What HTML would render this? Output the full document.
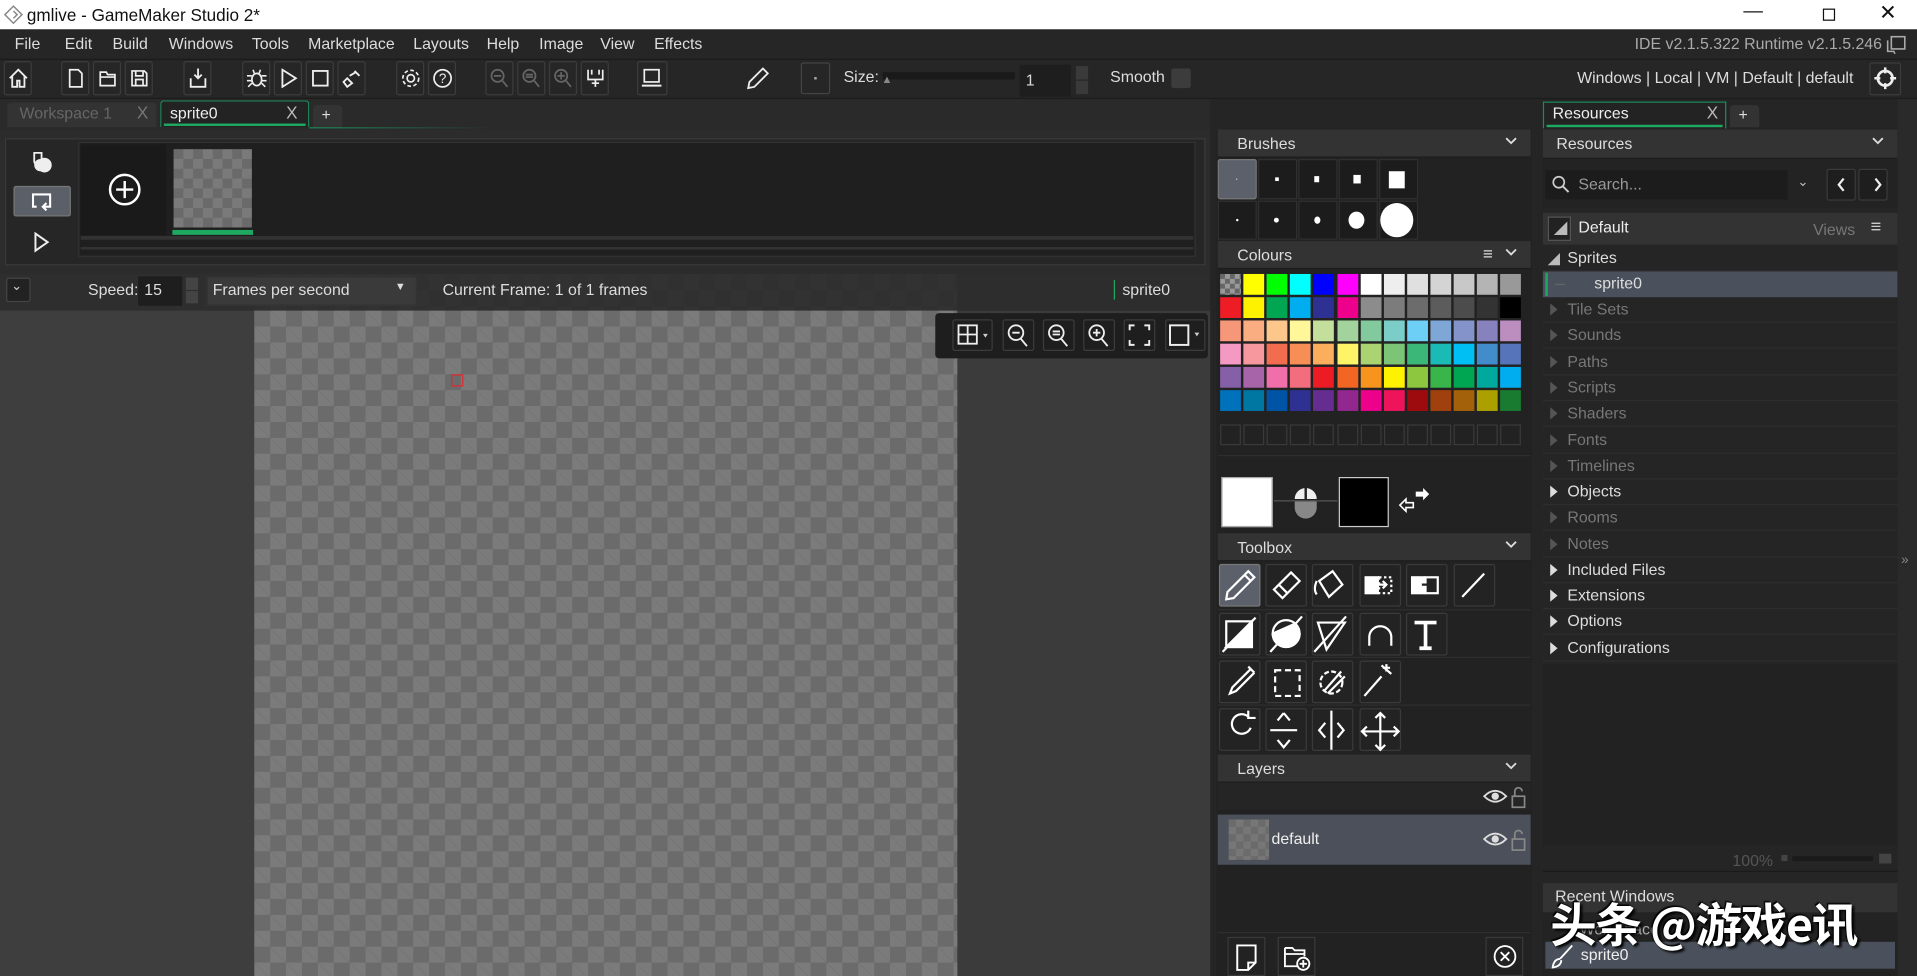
<!DOCTYPE html>
<html><head><meta charset="utf-8">
<style>
*{margin:0;padding:0;box-sizing:border-box}
html,body{width:1917px;height:976px;overflow:hidden;background:#222}
#w{position:absolute;left:0;top:0;width:1568px;height:798px;transform:scale(1.22258,1.2231);transform-origin:0 0;background:#222;font-family:"Liberation Sans","Noto Sans CJK SC",sans-serif;font-size:13px;color:#ddd;overflow:hidden}
.a{position:absolute}
.t{position:absolute;white-space:nowrap}
.btn{position:absolute;width:23px;height:28px;border:1px solid #3c3c3c;border-radius:2px;background:#262626}
.hdr{position:absolute;background:#333;height:23px;color:#ddd;font-size:13px;padding:4px 0 0 16px;border-bottom:1px solid #1c1c1c}
.chev{position:absolute;right:10px;top:3px;width:12px;height:12px}
.sw{position:absolute;width:17px;height:17px}
.es{position:absolute;width:17px;height:17px;border:1px solid #3a3a3a}
.tool{position:absolute;width:34px;height:35px;border:1px solid #3a3a3a;border-radius:2px;background:#232323}
.row{position:absolute;left:1262px;width:290px;height:21px;border-bottom:1px solid #2e2e2e;font-size:13px}
.row span{position:absolute;left:20px;top:2px}
.tri{position:absolute;left:6px;top:5px;width:0;height:0;border-top:5px solid transparent;border-bottom:5px solid transparent;border-left:6px solid #555}
.g{color:#777}
.bb{position:absolute;width:31px;height:32px;border:1px solid #3a3a3a;background:#222}
svg{position:absolute}
</style></head><body><div id="w">
<!-- title bar -->
<div class="a" style="left:0;top:0;width:1568px;height:24px;background:#fff"></div>
<svg style="left:3px;top:4px" width="16" height="16" viewBox="0 0 16 16"><path d="M8 1 L15 8 L8 15 L1 8 Z M8 5 L11 8 L8 11" fill="none" stroke="#888" stroke-width="1.2"/></svg>
<div class="t" style="left:22px;top:4px;color:#111;font-size:14px">gmlive - GameMaker Studio 2*</div>
<div class="t" style="left:1426px;top:1px;color:#111;font-size:16px">—</div>
<div class="a" style="left:1491px;top:7px;width:10px;height:10px;border:1px solid #111"></div>
<div class="t" style="left:1537px;top:1px;color:#111;font-size:17px">✕</div>
<!-- menu -->
<div class="a" style="left:0;top:24px;width:1568px;height:24px;background:#262626"></div>
<div class="t" style="left:12px;top:28px">File</div>
<div class="t" style="left:53px;top:28px">Edit</div>
<div class="t" style="left:92px;top:28px">Build</div>
<div class="t" style="left:138px;top:28px">Windows</div>
<div class="t" style="left:206px;top:28px">Tools</div>
<div class="t" style="left:252px;top:28px">Marketplace</div>
<div class="t" style="left:338px;top:28px">Layouts</div>
<div class="t" style="left:398px;top:28px">Help</div>
<div class="t" style="left:441px;top:28px">Image</div>
<div class="t" style="left:491px;top:28px">View</div>
<div class="t" style="left:535px;top:28px">Effects</div>
<div class="t" style="left:1337px;top:28px;color:#aaa">IDE v2.1.5.322 Runtime v2.1.5.246</div>
<svg style="left:1542px;top:28px" width="18" height="18" viewBox="0 0 18 18"><rect x="5" y="2" width="11" height="10" fill="none" stroke="#aaa" stroke-width="1.3"/><path d="M2 5 V14 H7 L8 16" fill="none" stroke="#aaa" stroke-width="1.3"/></svg>
<!-- toolbar -->
<div class="a" style="left:0;top:48px;width:1568px;height:33px;background:#262626;border-top:1px solid #1c1c1c;border-bottom:1px solid #1c1c1c"></div>
<div class="btn" style="left:3px;top:50px"></div>
<svg style="left:6px;top:55px" width="18" height="18" viewBox="0 0 18 18"><path d="M2 9 L9 2 L16 9 M4 7 V16 H8 V11 H10 V16 H14 V7" fill="none" stroke="#eee" stroke-width="1.5"/></svg>
<div class="btn" style="left:50px;top:50px"></div><div class="btn" style="left:76px;top:50px"></div><div class="btn" style="left:102px;top:50px"></div>
<svg style="left:54px;top:56px" width="16" height="16" viewBox="0 0 16 16"><path d="M3 1 H10 L13 4 V15 H3 Z" fill="none" stroke="#eee" stroke-width="1.4"/></svg>
<svg style="left:80px;top:56px" width="16" height="16" viewBox="0 0 16 16"><path d="M2 3 H7 L8 5 H14 V14 H2 Z M2 7 H14" fill="none" stroke="#eee" stroke-width="1.4"/></svg>
<svg style="left:106px;top:56px" width="16" height="16" viewBox="0 0 16 16"><path d="M2 2 H12 L14 4 V14 H2 Z M5 2 V6 H11 V2 M5 14 V9 H11 V14" fill="none" stroke="#eee" stroke-width="1.4"/></svg>
<div class="btn" style="left:150px;top:50px"></div>
<svg style="left:153px;top:55px" width="18" height="18" viewBox="0 0 18 18"><path d="M9 1 V9 M6 6 L9 9 L12 6 M3 9 V16 H15 V9" fill="none" stroke="#eee" stroke-width="1.5"/></svg>
<div class="btn" style="left:198px;top:50px"></div><div class="btn" style="left:224px;top:50px"></div><div class="btn" style="left:250px;top:50px"></div><div class="btn" style="left:276px;top:50px"></div>
<svg style="left:201px;top:55px" width="18" height="18" viewBox="0 0 18 18"><ellipse cx="9" cy="10" rx="4" ry="5" fill="none" stroke="#eee" stroke-width="1.4"/><path d="M1 7 H5 M13 7 H17 M1 11 H5 M13 11 H17 M2 16 L5 13 M16 16 L13 13 M6 2 L7 5 M12 2 L11 5" stroke="#eee" stroke-width="1.3"/></svg>
<svg style="left:228px;top:56px" width="16" height="16" viewBox="0 0 16 16"><path d="M3 1 L14 8 L3 15 Z" fill="none" stroke="#eee" stroke-width="1.5"/></svg>
<svg style="left:254px;top:56px" width="16" height="16" viewBox="0 0 16 16"><rect x="2" y="2" width="12" height="12" fill="none" stroke="#eee" stroke-width="1.5"/></svg>
<svg style="left:280px;top:56px" width="16" height="16" viewBox="0 0 16 16"><path d="M10 2 L14 6 M4 8 L8 12 L4 15 L1 11 Z M6 6 L11 3" fill="none" stroke="#eee" stroke-width="1.5"/></svg>
<div class="btn" style="left:324px;top:50px"></div><div class="btn" style="left:350px;top:50px"></div>
<svg style="left:327px;top:55px" width="18" height="18" viewBox="0 0 18 18"><circle cx="9" cy="9" r="3" fill="none" stroke="#eee" stroke-width="1.4"/><circle cx="9" cy="9" r="6.5" fill="none" stroke="#eee" stroke-width="1.4" stroke-dasharray="3 2"/></svg>
<svg style="left:353px;top:55px" width="18" height="18" viewBox="0 0 18 18"><circle cx="9" cy="9" r="7" fill="none" stroke="#eee" stroke-width="1.4"/><text x="9" y="13" font-size="11" fill="#eee" text-anchor="middle" font-family="Liberation Sans">?</text></svg>
<div class="btn" style="left:397px;top:50px"></div><div class="btn" style="left:423px;top:50px"></div><div class="btn" style="left:449px;top:50px"></div><div class="btn" style="left:475px;top:50px"></div>
<svg style="left:400px;top:55px" width="70" height="18" viewBox="0 0 70 18"><g fill="none" stroke="#666" stroke-width="1.4"><circle cx="7" cy="7" r="5"/><path d="M11 11 L15 16 M4 7 H10"/><circle cx="33" cy="7" r="5"/><path d="M37 11 L41 16 M30 6 H36 M30 8 H36"/><circle cx="59" cy="7" r="5"/><path d="M63 11 L67 16 M56 7 H62 M59 4 V10"/></g></svg>
<svg style="left:478px;top:55px" width="18" height="18" viewBox="0 0 18 18"><path d="M3 2 V10 H15 V2 M6 2 V6 M12 2 V6 M9 10 V16 M6 13 H12" fill="none" stroke="#eee" stroke-width="1.4"/></svg>
<div class="btn" style="left:521px;top:50px;width:25px"></div>
<svg style="left:524px;top:55px" width="18" height="18" viewBox="0 0 18 18"><rect x="3" y="2" width="12" height="10" fill="none" stroke="#eee" stroke-width="1.4"/><path d="M1 15 H17" stroke="#eee" stroke-width="1.6"/></svg>
<svg style="left:610px;top:54px" width="20" height="20" viewBox="0 0 20 20"><path d="M14 2 L18 6 L7 17 L2 18 L3 13 Z" fill="none" stroke="#eee" stroke-width="1.5"/></svg>
<div class="a" style="left:655px;top:51px;width:24px;height:26px;border:1px solid #444;border-radius:2px"></div>
<div class="a" style="left:666px;top:63px;width:2px;height:2px;background:#aaa"></div>
<div class="t" style="left:690px;top:55px">Size:</div>
<div class="a" style="left:722px;top:59px;width:108px;height:6px;background:#1a1a1a"></div>
<div class="t" style="left:721px;top:60px;color:#888;font-size:9px">▲</div>
<div class="a" style="left:834px;top:53px;width:42px;height:26px;background:#1e1e1e"></div>
<div class="t" style="left:839px;top:58px">1</div>
<div class="a" style="left:880px;top:54px;width:10px;height:11px;background:#3a3a3a"></div><div class="a" style="left:880px;top:66px;width:10px;height:11px;background:#3a3a3a"></div>
<div class="t" style="left:908px;top:55px">Smooth</div>
<div class="a" style="left:958px;top:56px;width:16px;height:16px;background:#3c3c3c;border-radius:2px"></div>
<div class="t" style="left:1290px;top:56px">Windows | Local | VM | Default | default</div>
<div class="a" style="left:1529px;top:51px;width:26px;height:27px;border:1px solid #3c3c3c;border-radius:2px"></div>
<svg style="left:1533px;top:55px" width="18" height="18" viewBox="0 0 18 18"><circle cx="9" cy="9" r="6" fill="none" stroke="#eee" stroke-width="2.2"/><path d="M9 0 V5 M9 13 V18 M0 9 H5 M13 9 H18" stroke="#eee" stroke-width="2"/></svg>
<!-- tabs -->
<div class="a" style="left:0;top:81px;width:1255px;height:25px;background:#2a2a2a"></div>
<div class="a" style="left:6px;top:84px;width:122px;height:20px;background:#333;border-radius:3px 3px 0 0"></div>
<div class="t" style="left:16px;top:85px;color:#666">Workspace 1</div>
<div class="t" style="left:112px;top:84px;color:#777;font-size:14px">X</div>
<div class="a" style="left:131px;top:82px;width:122px;height:22px;background:#232323;border:1px solid #1c8a5a;border-bottom:none;border-radius:3px 3px 0 0"></div>
<div class="a" style="left:134px;top:101px;width:116px;height:2px;background:#1fa862"></div>
<div class="t" style="left:139px;top:85px;color:#eee">sprite0</div>
<div class="t" style="left:234px;top:84px;color:#bbb;font-size:14px">X</div>
<div class="a" style="left:256px;top:86px;width:24px;height:18px;background:#333;border-radius:3px 3px 0 0"></div>
<div class="t" style="left:263px;top:86px;color:#ddd">+</div>
<div class="a" style="left:253px;top:104px;width:150px;height:1px;background:linear-gradient(90deg,#1c8a5a,transparent)"></div>
<!-- frames panel -->
<div class="a" style="left:0;top:106px;width:990px;height:120px;background:#2c2c2c"></div>
<div class="a" style="left:4px;top:113px;width:982px;height:104px;border:1px solid #3a3a3a;background:#262626"></div>
<svg style="left:24px;top:122px" width="20" height="20" viewBox="0 0 20 20"><path d="M4 3 H10 V14 A5 5 0 0 1 4 10 Z" fill="none" stroke="#eee" stroke-width="1.5"/><path d="M9 8 A6 6 0 1 1 9 18 A5 5 0 0 1 9 8Z" fill="#eee"/></svg>
<div class="a" style="left:11px;top:152px;width:47px;height:25px;background:#5a5f68;border:1px solid #777;border-radius:2px"></div>
<svg style="left:24px;top:156px" width="20" height="18" viewBox="0 0 20 18"><path d="M6 13 H3 V3 H17 V13 H12 M14 10 L11 13 L14 16" fill="none" stroke="#fff" stroke-width="1.7"/></svg>
<svg style="left:26px;top:189px" width="16" height="18" viewBox="0 0 16 18"><path d="M3 2 L13 9 L3 16 Z" fill="none" stroke="#eee" stroke-width="1.6"/></svg>
<div class="a" style="left:64px;top:116px;width:914px;height:94px;background:#1f1f1f;border:1px solid #333"></div>
<div class="a" style="left:66px;top:118px;width:70px;height:74px;background:#1a1a1a"></div>
<svg style="left:88px;top:141px" width="28" height="28" viewBox="0 0 28 28"><circle cx="14" cy="14" r="12" fill="none" stroke="#fff" stroke-width="2"/><path d="M14 7 V21 M7 14 H21" stroke="#fff" stroke-width="2"/></svg>
<div class="a" style="left:142px;top:122px;width:64px;height:64px;background-color:#6a6a6a;background-image:linear-gradient(45deg,#7a7a7a 25%,transparent 25%,transparent 75%,#7a7a7a 75%),linear-gradient(45deg,#7a7a7a 25%,transparent 25%,transparent 75%,#7a7a7a 75%);background-size:16px 16px;background-position:0 0,8px 8px"></div>
<div class="a" style="left:141px;top:188px;width:66px;height:4px;background:#1fa862"></div>
<div class="a" style="left:66px;top:193px;width:910px;height:3px;background:#333"></div>
<div class="a" style="left:66px;top:202px;width:910px;height:2px;background:#333"></div>
<!-- speed bar -->
<div class="a" style="left:0;top:224px;width:990px;height:30px;background:#2e2e2e"></div>
<div class="a" style="left:208px;top:224px;width:575px;height:30px;background-color:#3a3a3a;background-image:linear-gradient(45deg,#444 25%,transparent 25%,transparent 75%,#444 75%),linear-gradient(45deg,#444 25%,transparent 25%,transparent 75%,#444 75%);background-size:26px 26px;background-position:0 0,13px 13px;opacity:.9"></div>
<div class="a" style="left:208px;top:224px;width:782px;height:30px;background:rgba(46,46,46,.75)"></div>
<div class="a" style="left:5px;top:227px;width:20px;height:20px;border:1px solid #444;border-radius:2px;background:#222"></div>
<div class="t" style="left:9px;top:227px;font-size:11px;color:#ccc">⌄</div>
<div class="t" style="left:72px;top:229px">Speed:</div>
<div class="a" style="left:113px;top:226px;width:36px;height:24px;background:#1e1e1e"></div>
<div class="t" style="left:118px;top:229px">15</div>
<div class="a" style="left:152px;top:227px;width:10px;height:10px;background:#444"></div><div class="a" style="left:152px;top:238px;width:10px;height:10px;background:#444"></div>
<div class="a" style="left:169px;top:226px;width:172px;height:24px;background:#3a3a3a;border:1px solid #333"></div>
<div class="t" style="left:174px;top:229px">Frames per second</div>
<div class="t" style="left:323px;top:229px;font-size:9px">▼</div>
<div class="t" style="left:362px;top:229px">Current Frame: 1 of 1 frames</div>
<div class="a" style="left:911px;top:229px;width:1px;height:16px;background:#1fa862"></div>
<div class="t" style="left:918px;top:229px">sprite0</div>
<!-- canvas -->
<div class="a" style="left:0;top:254px;width:990px;height:544px;background:#3b3b3b"></div>
<div class="a" style="left:0;top:254px;width:208px;height:544px;background:#3e3e3e"></div>
<div class="a" style="left:208px;top:254px;width:575px;height:544px;background-color:#6b6b6b;background-image:linear-gradient(45deg,#7b7b7b 25%,transparent 25%,transparent 75%,#7b7b7b 75%),linear-gradient(45deg,#7b7b7b 25%,transparent 25%,transparent 75%,#7b7b7b 75%);background-size:26px 26px;background-position:0 0,13px 13px"></div>
<div class="a" style="left:369px;top:306px;width:10px;height:10px;border:1px solid #e0282c"></div>
<div class="a" style="left:765px;top:256px;width:223px;height:37px;background:#1e1e1e;border-radius:3px"></div>
<div class="a" style="left:779px;top:261px;width:33px;height:26px;border:1px solid #3c3c3c;border-radius:2px"></div>
<svg style="left:783px;top:265px" width="28" height="18" viewBox="0 0 28 18"><rect x="1" y="1" width="15" height="15" fill="none" stroke="#eee" stroke-width="1.5"/><path d="M8.5 1 V16 M1 8.5 H16" stroke="#eee" stroke-width="1.5"/><path d="M21 8 L25 8 L23 11 Z" fill="#ccc"/></svg>
<div class="a" style="left:820px;top:261px;width:26px;height:26px;border:1px solid #3c3c3c;border-radius:2px"></div>
<div class="a" style="left:853px;top:261px;width:26px;height:26px;border:1px solid #3c3c3c;border-radius:2px"></div>
<div class="a" style="left:886px;top:261px;width:26px;height:26px;border:1px solid #3c3c3c;border-radius:2px"></div>
<svg style="left:823px;top:264px" width="90" height="20" viewBox="0 0 90 20"><g fill="none" stroke="#eee" stroke-width="1.5"><circle cx="8" cy="8" r="6"/><path d="M12 13 L17 19 M5 8 H11"/><circle cx="41" cy="8" r="6"/><path d="M45 13 L50 19 M38 7 H44 M38 9.5 H44"/><circle cx="74" cy="8" r="6"/><path d="M78 13 L83 19 M71 8 H77 M74 5 V11"/></g></svg>
<div class="a" style="left:919px;top:261px;width:26px;height:26px;border:1px solid #3c3c3c;border-radius:2px"></div>
<svg style="left:923px;top:265px" width="18" height="18" viewBox="0 0 18 18"><path d="M1 5 V1 H5 M13 1 H17 V5 M17 13 V17 H13 M5 17 H1 V13" fill="none" stroke="#eee" stroke-width="1.6"/></svg>
<div class="a" style="left:953px;top:261px;width:33px;height:26px;border:1px solid #3c3c3c;border-radius:2px"></div>
<svg style="left:956px;top:264px" width="30" height="20" viewBox="0 0 30 20"><rect x="1" y="2" width="15" height="16" fill="none" stroke="#eee" stroke-width="1.6"/><path d="M21 8 L25 8 L23 11 Z" fill="#ccc"/></svg>
<!-- middle column -->
<div class="a" style="left:990px;top:81px;width:268px;height:717px;background:#252525"></div>
<div class="a" style="left:995px;top:106px;width:258px;height:692px;background:#222"></div>
<div class="hdr" style="left:996px;top:106px;width:256px">Brushes<svg class="chev" viewBox="0 0 12 12"><path d="M2 4 L6 8 L10 4" fill="none" stroke="#ddd" stroke-width="1.5"/></svg></div>
<div class="a" style="left:996px;top:130px;width:32px;height:33px;background:#5b606a;border:1px solid #777;border-radius:2px"></div>
<div class="a" style="left:1029px;top:130px;width:32px;height:33px;border:1px solid #303030;background:#1c1c1c"></div>
<div class="a" style="left:1062px;top:130px;width:32px;height:33px;border:1px solid #303030;background:#1c1c1c"></div>
<div class="a" style="left:1095px;top:130px;width:32px;height:33px;border:1px solid #303030;background:#1c1c1c"></div>
<div class="a" style="left:1128px;top:130px;width:32px;height:33px;border:1px solid #303030;background:#1c1c1c"></div>
<div class="a" style="left:996px;top:164px;width:32px;height:32px;border:1px solid #303030;background:#1c1c1c"></div>
<div class="a" style="left:1029px;top:164px;width:32px;height:32px;border:1px solid #303030;background:#1c1c1c"></div>
<div class="a" style="left:1062px;top:164px;width:32px;height:32px;border:1px solid #303030;background:#1c1c1c"></div>
<div class="a" style="left:1095px;top:164px;width:32px;height:32px;border:1px solid #303030;background:#1c1c1c"></div>
<div class="a" style="left:1128px;top:164px;width:32px;height:32px;border:1px solid #303030;background:#1c1c1c"></div>
<div class="a" style="left:1011px;top:146px;width:1px;height:1px;background:#ccc"></div>
<div class="a" style="left:1043px;top:145px;width:3px;height:3px;background:#fff"></div>
<div class="a" style="left:1075px;top:144px;width:4px;height:5px;background:#fff"></div>
<div class="a" style="left:1107px;top:143px;width:6px;height:7px;background:#fff"></div>
<div class="a" style="left:1136px;top:140px;width:13px;height:14px;background:#fff"></div>
<div class="a" style="left:1011px;top:179px;width:2px;height:2px;background:#fff;border-radius:50%"></div>
<div class="a" style="left:1042px;top:178px;width:4px;height:4px;background:#fff;border-radius:50%"></div>
<div class="a" style="left:1075px;top:177px;width:5px;height:6px;background:#fff;border-radius:50%"></div>
<div class="a" style="left:1103px;top:173px;width:13px;height:14px;background:#fff;border-radius:50%"></div>
<div class="a" style="left:1129px;top:166px;width:27px;height:28px;background:#fff;border-radius:50%"></div>
<div class="hdr" style="left:996px;top:197px;width:256px">Colours<div class="t" style="left:217px;top:2px;font-size:14px">≡</div><svg class="chev" viewBox="0 0 12 12"><path d="M2 4 L6 8 L10 4" fill="none" stroke="#ddd" stroke-width="1.5"/></svg></div>
<div id="pal"></div>
<div class="a" style="left:996px;top:372px;width:256px;height:1px;background:#2e2e2e"></div>
<div class="a" style="left:999px;top:390px;width:42px;height:41px;background:#fff;border:1px solid #aaa"></div>
<div class="a" style="left:1042px;top:409px;width:52px;height:1px;background:#555"></div>
<svg style="left:1057px;top:396px" width="22" height="28" viewBox="0 0 22 28"><path d="M2 12 A9 9 0 0 1 20 12 Z" fill="#eee"/><path d="M2 14 H20 V19 A9 9 0 0 1 2 19 Z" fill="#888"/><path d="M11 3 V12" stroke="#222" stroke-width="2"/></svg>
<div class="a" style="left:1095px;top:390px;width:41px;height:41px;background:#000;border:1px solid #ccc"></div>
<svg style="left:1144px;top:398px" width="26" height="24" viewBox="0 0 26 24"><path d="M14 4 L20 4 L20 1 L25 6 L20 11 L20 8 L14 8 Z" fill="#fff"/><path d="M12 13 L6 13 L6 10 L1 15 L6 20 L6 17 L12 17 Z" fill="none" stroke="#fff" stroke-width="1.3"/></svg>
<div class="hdr" style="left:996px;top:436px;width:256px">Toolbox<svg class="chev" viewBox="0 0 12 12"><path d="M2 4 L6 8 L10 4" fill="none" stroke="#ddd" stroke-width="1.5"/></svg></div>
<div class="tool" style="left:997px;top:461px;background:#5b606a;border-color:#777"></div>
<div class="tool" style="left:1035px;top:461px"></div><div class="tool" style="left:1073px;top:461px"></div><div class="tool" style="left:1112px;top:461px"></div><div class="tool" style="left:1150px;top:461px"></div><div class="tool" style="left:1189px;top:461px"></div>
<div class="tool" style="left:997px;top:501px"></div><div class="tool" style="left:1035px;top:501px"></div><div class="tool" style="left:1073px;top:501px"></div><div class="tool" style="left:1112px;top:501px"></div><div class="tool" style="left:1150px;top:501px"></div>
<div class="tool" style="left:997px;top:540px"></div><div class="tool" style="left:1035px;top:540px"></div><div class="tool" style="left:1073px;top:540px"></div><div class="tool" style="left:1112px;top:540px"></div>
<div class="tool" style="left:997px;top:579px"></div><div class="tool" style="left:1035px;top:579px"></div><div class="tool" style="left:1073px;top:579px"></div><div class="tool" style="left:1112px;top:579px"></div>
<div class="a" style="left:996px;top:498px;width:256px;height:1px;background:#2e2e2e"></div>
<div class="a" style="left:996px;top:537px;width:256px;height:1px;background:#2e2e2e"></div>
<div class="a" style="left:996px;top:576px;width:256px;height:1px;background:#2e2e2e"></div>
<svg style="left:997px;top:461px" width="230" height="160" viewBox="0 0 230 160" fill="none" stroke="#fff" stroke-width="1.8">
<path d="M24 6 L29 11 L12 28 L6 29 L7 23 Z M21 9 L26 14"/>
<path d="M59 7 L66 14 L52 28 L45 21 Z M49 17 L56 24"/>
<path d="M82 14 L93 6 L101 17 L90 27 Z M80 14 Q77 21 80 25"/>
<rect x="120" y="11" width="10" height="13" fill="#fff"/><rect x="131" y="11" width="10" height="13" stroke-dasharray="2 2"/><path d="M128 17 H137 M134 14 L137 17 L134 20"/>
<rect x="158" y="11" width="10" height="13" fill="#fff"/><rect x="169" y="11" width="10" height="13"/><path d="M166 17 H175 M172 14 L175 17 L172 20" stroke="#222"/>
<path d="M199 27 L217 8"/>
<rect x="6" y="47" width="21" height="21" /><path d="M6 68 L27 47 V68 Z" fill="#fff"/><path d="M3 72 L30 44"/>
<ellipse cx="55" cy="57" rx="11" ry="11"/><path d="M44 57 A11 11 0 0 0 66 57 L62 49 Z" fill="#fff"/><path d="M42 72 L68 43"/>
<path d="M81 48 L103 48 L88 70 Z"/><path d="M78 72 L104 43"/>
<path d="M123 67 V60 A9 9 0 0 1 141 60 V67"/>
<path d="M160 48 H178 M169 48 V69 M164 69 H174" stroke-width="3"/>
<path d="M24 84 L29 89 M26 86 L11 101 L9 106 L14 104 L29 89"/>
<rect x="46" y="87" width="20" height="21" stroke-dasharray="5 3"/>
<ellipse cx="92" cy="97" rx="9" ry="9" stroke-dasharray="4 2"/><path d="M86 104 L100 88 M89 106 L103 92"/>
<path d="M119 108 L133 92 M137 82 V88 M134 85 H140 M133 83 L141 90"/>
<path d="M24 125 A8 8 0 1 0 26 134 M24 120 V126 H30"/>
<path d="M42 136 H64 M53 122 L48 128 M53 122 L58 128 M48 144 L53 150 L58 144" stroke-dasharray=""/>
<path d="M92 120 V152 M87 130 L82 136 L87 142 M97 130 L102 136 L97 142"/>
<path d="M132 122 V152 M117 137 H147 M128 126 L132 122 L136 126 M128 148 L132 152 L136 148 M121 133 L117 137 L121 141 M143 133 L147 137 L143 141"/>
</svg>
<div class="hdr" style="left:996px;top:617px;width:256px">Layers<svg class="chev" viewBox="0 0 12 12"><path d="M2 4 L6 8 L10 4" fill="none" stroke="#ddd" stroke-width="1.5"/></svg></div>
<div class="a" style="left:996px;top:640px;width:256px;height:22px;background:#252525"></div>
<svg style="left:1213px;top:642px" width="40" height="20" viewBox="0 0 40 20"><path d="M1 9 Q10 0 19 9 Q10 18 1 9Z" fill="none" stroke="#ddd" stroke-width="1.5"/><circle cx="10" cy="9" r="3" fill="#ddd"/><rect x="24" y="9" width="10" height="9" fill="none" stroke="#888" stroke-width="1.4"/><path d="M26 9 V5 A3 3 0 0 1 32 5" fill="none" stroke="#888" stroke-width="1.4"/></svg>
<div class="a" style="left:996px;top:666px;width:256px;height:41px;background:#4b505a"></div>
<div class="a" style="left:1005px;top:670px;width:33px;height:33px;background-color:#6b6b6b;background-image:linear-gradient(45deg,#777 25%,transparent 25%,transparent 75%,#777 75%),linear-gradient(45deg,#777 25%,transparent 25%,transparent 75%,#777 75%);background-size:12px 12px;background-position:0 0,6px 6px"></div>
<div class="t" style="left:1040px;top:678px;color:#eee">default</div>
<svg style="left:1213px;top:676px" width="40" height="22" viewBox="0 0 40 22"><path d="M1 10 Q10 1 19 10 Q10 19 1 10Z" fill="none" stroke="#ddd" stroke-width="1.5"/><circle cx="10" cy="10" r="3" fill="#ddd"/><rect x="24" y="10" width="10" height="9" fill="none" stroke="#888" stroke-width="1.4"/><path d="M26 10 V6 A3 3 0 0 1 32 6" fill="none" stroke="#888" stroke-width="1.4"/></svg>
<div class="a" style="left:996px;top:762px;width:256px;height:1px;background:#2e2e2e"></div>
<div class="bb" style="left:1004px;top:766px"></div><div class="bb" style="left:1045px;top:766px"></div><div class="bb" style="left:1215px;top:766px"></div>
<svg style="left:1010px;top:772px" width="20" height="22" viewBox="0 0 20 22"><path d="M2 1 H17 V15 L11 21 H2 Z M11 21 V15 H17" fill="none" stroke="#fff" stroke-width="1.6"/></svg>
<svg style="left:1049px;top:772px" width="24" height="22" viewBox="0 0 24 22"><path d="M2 3 H8 L10 5 H18 V10 M2 3 V18 H12 M2 8 H18" fill="none" stroke="#fff" stroke-width="1.5"/><circle cx="17" cy="16" r="5" fill="none" stroke="#fff" stroke-width="1.5"/><path d="M17 13 V19 M14 16 H20" stroke="#fff" stroke-width="1.5"/></svg>
<svg style="left:1221px;top:772px" width="20" height="20" viewBox="0 0 20 20"><circle cx="10" cy="10" r="8.5" fill="none" stroke="#fff" stroke-width="1.5"/><path d="M6.5 6.5 L13.5 13.5 M13.5 6.5 L6.5 13.5" stroke="#fff" stroke-width="1.5"/></svg>
<!-- resources column -->
<div class="a" style="left:1258px;top:81px;width:294px;height:717px;background:#252525"></div>
<div class="a" style="left:1262px;top:83px;width:150px;height:22px;background:#232323;border:1px solid #1c8a5a;border-bottom:none"></div>
<div class="a" style="left:1265px;top:102px;width:144px;height:2px;background:#1fa862"></div>
<div class="t" style="left:1270px;top:85px;color:#eee">Resources</div>
<div class="t" style="left:1396px;top:84px;color:#bbb;font-size:14px">X</div>
<div class="a" style="left:1415px;top:86px;width:24px;height:18px;background:#333;border-radius:3px 3px 0 0"></div>
<div class="t" style="left:1422px;top:86px">+</div>
<div class="hdr" style="left:1262px;top:106px;width:290px;padding-left:11px;height:24px">Resources<svg class="chev" viewBox="0 0 12 12"><path d="M2 4 L6 8 L10 4" fill="none" stroke="#ddd" stroke-width="1.5"/></svg></div>
<div class="a" style="left:1262px;top:130px;width:290px;height:40px;background:#232323"></div>
<div class="a" style="left:1264px;top:139px;width:198px;height:24px;background:#1c1c1c"></div>
<svg style="left:1269px;top:143px" width="16" height="16" viewBox="0 0 16 16"><circle cx="6" cy="6" r="4.5" fill="none" stroke="#ccc" stroke-width="1.4"/><path d="M9.5 9.5 L14 14" stroke="#ccc" stroke-width="1.6"/></svg>
<div class="t" style="left:1291px;top:143px;color:#999">Search...</div>
<div class="t" style="left:1470px;top:142px;font-size:11px;color:#bbb">⌄</div>
<div class="a" style="left:1494px;top:138px;width:24px;height:26px;border:1px solid #3a3a3a;border-radius:2px;background:#1e1e1e"></div>
<div class="a" style="left:1520px;top:138px;width:24px;height:26px;border:1px solid #3a3a3a;border-radius:2px;background:#1e1e1e"></div>
<svg style="left:1499px;top:143px" width="44" height="16" viewBox="0 0 44 16"><path d="M9 3 L5 8 L9 13 M35 3 L39 8 L35 13" fill="none" stroke="#eee" stroke-width="1.8"/></svg>
<div class="a" style="left:1262px;top:174px;width:290px;height:26px;background:#333"></div>
<div class="a" style="left:1266px;top:177px;width:19px;height:20px;border:1px solid #555;background:#222"></div>
<div class="t" style="left:1271px;top:179px;font-size:11px;color:#bbb">◢</div>
<div class="t" style="left:1291px;top:178px;color:#eee">Default</div>
<div class="t" style="left:1483px;top:180px;color:#777">Views</div>
<div class="t" style="left:1530px;top:177px;color:#ccc;font-size:15px">≡</div>
<div class="row" style="top:201px"><div class="t" style="left:4px;top:3px;color:#bbb;font-size:10px">◢</div><span>Sprites</span></div>
<div class="row" style="top:222px;background:#4b515c;border:none"><div class="a" style="left:2px;top:1px;width:2px;height:19px;background:#1fa862"></div><div class="a" style="left:10px;top:10px;width:8px;height:1px;background:#666"></div><span style="left:42px;color:#ddd">sprite0</span></div>
<div class="row" style="top:243px"><div class="tri"></div><span class="g">Tile Sets</span></div>
<div class="row" style="top:264px"><div class="tri"></div><span class="g">Sounds</span></div>
<div class="row" style="top:286px"><div class="tri"></div><span class="g">Paths</span></div>
<div class="row" style="top:307px"><div class="tri"></div><span class="g">Scripts</span></div>
<div class="row" style="top:328px"><div class="tri"></div><span class="g">Shaders</span></div>
<div class="row" style="top:350px"><div class="tri"></div><span class="g">Fonts</span></div>
<div class="row" style="top:371px"><div class="tri"></div><span class="g">Timelines</span></div>
<div class="row" style="top:392px"><div class="tri" style="border-left-color:#ddd"></div><span>Objects</span></div>
<div class="row" style="top:413px"><div class="tri"></div><span class="g">Rooms</span></div>
<div class="row" style="top:435px"><div class="tri"></div><span class="g">Notes</span></div>
<div class="row" style="top:456px"><div class="tri" style="border-left-color:#ddd"></div><span>Included Files</span></div>
<div class="row" style="top:477px"><div class="tri" style="border-left-color:#ddd"></div><span>Extensions</span></div>
<div class="row" style="top:498px"><div class="tri" style="border-left-color:#ddd"></div><span>Options</span></div>
<div class="row" style="top:520px"><div class="tri" style="border-left-color:#ddd"></div><span>Configurations</span></div>
<div class="a" style="left:1262px;top:543px;width:290px;height:148px;background:#222"></div>
<div class="t" style="left:1417px;top:696px;color:#555">100%</div>
<div class="a" style="left:1457px;top:699px;width:5px;height:5px;background:#444"></div>
<div class="a" style="left:1466px;top:700px;width:66px;height:4px;background:#1a1a1a"></div>
<div class="a" style="left:1537px;top:698px;width:10px;height:8px;background:#444"></div>
<div class="a" style="left:1262px;top:712px;width:290px;height:1px;background:#1a1a1a"></div>
<div class="a" style="left:1262px;top:722px;width:290px;height:24px;background:#333"></div>
<div class="t" style="left:1272px;top:725px;color:#ddd">Recent Windows</div>
<div class="a" style="left:1262px;top:746px;width:290px;height:52px;background:#232323"></div>
<div class="t" style="left:1292px;top:752px;color:#aaa">Workspace 1</div>
<div class="a" style="left:1264px;top:770px;width:286px;height:22px;background:#4b515c"></div>
<svg style="left:1268px;top:772px" width="20" height="20" viewBox="0 0 20 20"><path d="M18 1 L8 12 M8 12 Q3 12 2 19 Q9 18 9 13" fill="none" stroke="#fff" stroke-width="1.5"/></svg>
<div class="t" style="left:1293px;top:773px;color:#eee">sprite0</div>
<div class="a" style="left:1552px;top:81px;width:16px;height:717px;background:#2a2a2a"></div>
<div class="t" style="left:1555px;top:452px;color:#888;font-size:11px">»</div>
<!-- watermark -->
<div class="t" style="left:1268px;top:726px;font-size:38px;font-weight:bold;color:#fff;text-shadow:2px 2px 2px #000,-1px -1px 1px #000;font-family:'Noto Sans CJK SC','WenQuanYi Zen Hei',sans-serif;letter-spacing:-1px">头条 @游戏e讯</div>
</div>
<script>
var rows=[
["chk","#ffff00","#00ff00","#00ffff","#0000ff","#ff00ff","#ffffff","#eeeeee","#e0e0e0","#d4d4d4","#c8c8c8","#b4b4b4","#999999"],
["#ee1c24","#fff200","#00a651","#00aeef","#2e3192","#ec008c","#8c8c8c","#7c7c7c","#6c6c6c","#5c5c5c","#4c4c4c","#333333","#000000"],
["#f7977a","#f9ad81","#fdc68a","#fff79a","#c4df9b","#a3d39c","#82ca9d","#7bcdc8","#6ecff6","#7ea7d8","#8493ca","#8781bd","#bc8dbf"],
["#f49ac2","#f6989d","#f26c4f","#f68e55","#fbaf5c","#fff467","#acd372","#7cc576","#3bb878","#1abbb4","#00bff3","#438ccb","#5574b9"],
["#8560a8","#a864a8","#f06eaa","#f26d7d","#ed1c24","#f26522","#f7941d","#fff200","#8dc63f","#39b54a","#00a651","#00a99d","#00aeef"],
["#0072bc","#0076a3","#0054a6","#2e3192","#662d91","#92278f","#ec008c","#ed145b","#9e0b0f","#a0410d","#a36209","#aba000","#197b30"]];
var h="";
for(var r=0;r<6;r++)for(var c=0;c<13;c++){var col=rows[r][c];var x=998+c*19.1,y=224+r*19;
if(col=="chk")h+='<div class="sw" style="left:'+x+'px;top:'+y+'px;background:conic-gradient(#999 25%,#666 0 50%,#999 0 75%,#666 0);background-size:8px 8px"></div>';
else h+='<div class="sw" style="left:'+x+'px;top:'+y+'px;background:'+col+'"></div>';}
for(var c=0;c<13;c++){h+='<div class="es" style="left:'+(998+c*19.1)+'px;top:347px"></div>';}
document.getElementById("pal").innerHTML=h;
</script>
</body></html>
